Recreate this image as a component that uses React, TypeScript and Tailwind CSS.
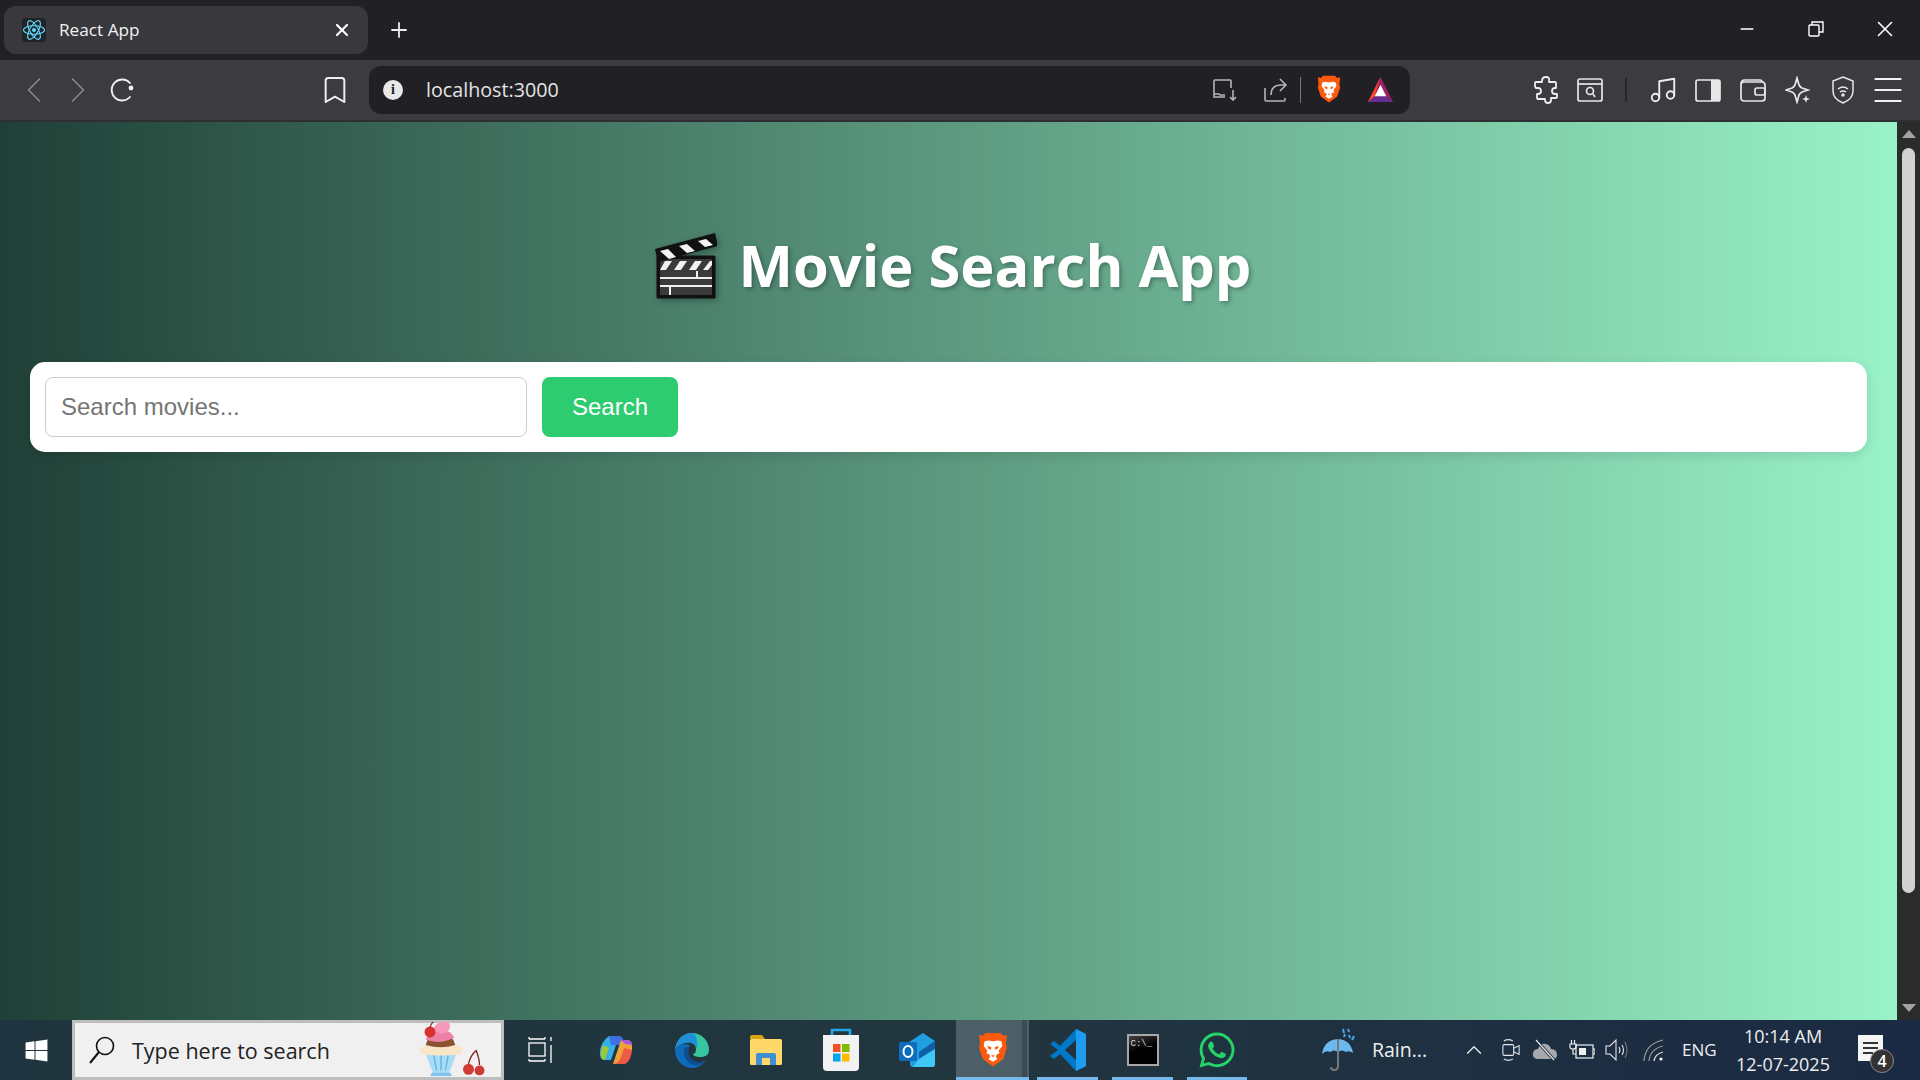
import {
  Bookmark,
  ChevronLeft,
  ChevronRight,
  ChevronUp,
  Menu,
  Minus,
  Music,
  Plus,
  X,
} from "lucide-react";
import { FaWhatsapp, FaWindows } from "react-icons/fa";

const UI_FONT = "font-['Open_Sans','Noto_Sans',sans-serif]";

function ReactLogo() {
  return (
    <div className="w-6 h-6 rounded-sm bg-[#20232a] flex items-center justify-center">
      <svg viewBox="-12 -12 24 24" className="w-6 h-6" fill="none" stroke="#61dafb" strokeWidth="1.1">
        <circle r="2" fill="#61dafb" stroke="none" />
        <ellipse rx="10.5" ry="4.2" />
        <ellipse rx="10.5" ry="4.2" transform="rotate(60)" />
        <ellipse rx="10.5" ry="4.2" transform="rotate(120)" />
      </svg>
    </div>
  );
}

function BraveLogo({ size }: { size: number }) {
  return (
    <svg viewBox="0 0 32 38" width={size} height={size * 1.18}>
      <path d="M8 1h16l3 3 4-1-1 9 1 5-4 12-11 8-11-8L1 17l1-5-1-9 4 1z" fill="#fb5a0c" />
      <path
        d="M16 10l-5-1-4 1-1 5 4 5-1 3 3 1 1 3-2 2 5 3 5-3-2-2 1-3 3-1-1-3 4-5-1-5-4-1z"
        fill="#fff"
      />
      <path d="M10 15l4 1v3l-3-1zM22 15l-4 1v3l3-1zM14 25h4l-2 2z" fill="#fb5a0c" />
    </svg>
  );
}

function BatLogo() {
  return (
    <svg viewBox="0 0 28 28" className="w-[27px] h-[27px]">
      <path d="M14 1L1 27h26z" fill="#9e1f63" />
      <path d="M14 1L1 27l7-6z" fill="#ff4724" />
      <path d="M1 27h26l-7-6H8z" fill="#662d91" />
      <path d="M14 9l-6 12h12z" fill="#fff" />
    </svg>
  );
}

function Clapper() {
  return (
    <svg viewBox="0 0 62 66" className="w-[62px] h-[66px] drop-shadow-[2px_2px_3px_rgba(0,0,0,0.3)]">
      <path d="M3 64V24h56v40z" fill="#111" stroke="#111" strokeWidth="3" strokeLinejoin="round" />
      <rect x="5" y="26" width="52" height="36" fill="#3a3a3a" />
      <path d="M10 28h7l-6 9H5zM25 28h7l-6 9h-7zM40 28h7l-6 9h-7zM55 28h2v4l-4 5h-5z" fill="#f2f2f2" />
      <path d="M5 45h52M5 53h52M42 38v7M15 53v9" stroke="#eee" strokeWidth="2" />
      <path d="M0 16L60 0l3 13L3 29z" fill="#111" />
      <path d="M5 18l8-2 8 8-7 2zM24 13l8-2 8 7-8 2zM43 8l8-2 7 6-8 2z" fill="#f2f2f2" />
    </svg>
  );
}

function CastIcon() {
  return (
    <svg viewBox="0 0 26 24" className="w-[26px] h-6" fill="none" stroke="#b5b5b8" strokeWidth="1.6">
      <path d="M13 19H2v-3V3q0-1 1-1h15q1 0 1 1v7" />
      <path d="M2 16h5l1 1h5" />
      <path d="M21 12v10M18 19l3 3 3-3" />
    </svg>
  );
}

function ShareIcon() {
  return (
    <svg viewBox="0 0 26 26" className="w-[26px] h-[26px]" fill="none" stroke="#b5b5b8" strokeWidth="1.6">
      <path d="M3 11v12q0 1 1 1h18q1 0 1-1v-2" />
      <path d="M9 18q0-10 10-10h4M18 2l6 6-6 6" />
    </svg>
  );
}

function PuzzleIcon() {
  return (
    <svg viewBox="0 0 26 28" className="w-[26px] h-7" fill="none" stroke="#eee" strokeWidth="1.8" strokeLinejoin="round">
      <path d="M9 5q0-4 4-4t3 4v1h6q1 0 1 1v5h-1q-3 0-3 3t3 3h2v3q0 1-1 1h-5v2q0 3-3 3t-3-3v-1H5q-1 0-1-1v-4h1q3 0 3-3t-3-3H3q-1-1-1-2V7q0-1 1-1h6z" />
    </svg>
  );
}

function ReaderIcon() {
  return (
    <svg viewBox="0 0 26 26" className="w-[26px] h-[26px]" fill="none" stroke="#e8e8e8" strokeWidth="1.7">
      <rect x="1" y="2" width="24" height="22" rx="2" />
      <path d="M1 7h24" />
      <circle cx="13" cy="14" r="3.5" />
      <path d="M16 17l2 3" />
    </svg>
  );
}

function SidebarIcon() {
  return (
    <svg viewBox="0 0 26 24" className="w-[26px] h-6">
      <rect x="1" y="2" width="24" height="21" rx="2" fill="none" stroke="#e8e8e8" strokeWidth="1.7" />
      <rect x="16" y="2" width="9" height="21" fill="#e8e8e8" />
    </svg>
  );
}

function WalletIcon() {
  return (
    <svg viewBox="0 0 26 24" className="w-[26px] h-6" fill="none" stroke="#e8e8e8" strokeWidth="1.7">
      <rect x="1" y="4" width="24" height="19" rx="3" />
      <path d="M1 6q0-4 4-4h15q2 0 2 2" />
      <rect x="15" y="10" width="10" height="7" rx="2" />
    </svg>
  );
}

function SparkleIcon() {
  return (
    <svg viewBox="0 0 26 28" className="w-[26px] h-7" fill="none" stroke="#e8e8e8" strokeWidth="1.7">
      <path d="M12 2l2 7q1 2 3 3l6 2-6 2q-2 1-3 3l-2 7-2-7q-1-2-3-3l-6-2 6-2q2-1 3-3z" />
      <path d="M21 19l1 3 3 1-3 1-1 3-1-3-3-1 3-1z" fill="#e8e8e8" stroke="none" />
    </svg>
  );
}

function VpnIcon() {
  return (
    <svg viewBox="0 0 24 28" className="w-6 h-7" fill="none" stroke="#e8e8e8" strokeWidth="1.5">
      <path d="M12 1l10 4v10q0 8-10 12Q2 23 2 15V5z" />
      <path d="M7 13q5-4 10 0M9 16q3-2 6 0" />
      <circle cx="12" cy="19" r="1" fill="#e8e8e8" />
    </svg>
  );
}

function ReloadIcon() {
  return (
    <svg viewBox="0 0 26 26" className="w-[26px] h-[26px]" fill="none" stroke="#f0f0f0" strokeWidth="1.8">
      <path d="M21 20a10.5 10.5 0 1 1 0-14" strokeLinecap="round" />
      <circle cx="22" cy="11" r="2.4" fill="#f0f0f0" stroke="none" />
    </svg>
  );
}

function RestoreIcon() {
  return (
    <svg viewBox="0 0 16 16" className="w-4 h-4" fill="none" stroke="#fff" strokeWidth="1.4">
      <rect x="1" y="4" width="10" height="11" rx="1" />
      <path d="M4 4V1h11v10h-4" />
    </svg>
  );
}

function ToolSlot({ children, w = "w-[45px]" }: { children: React.ReactNode; w?: string }) {
  return <div className={`${w} h-full flex items-center justify-center shrink-0`}>{children}</div>;
}

function TitleBar() {
  return (
    <div className={`h-[60px] bg-[#202025] flex items-start shrink-0 ${UI_FONT}`}>
      <div className="ml-1 mt-[6px] w-[364px] h-12 rounded-xl bg-[#38383d] flex items-center pl-[18px] pr-4">
        <ReactLogo />
        <span className="ml-[13px] text-[17.2px] text-[#f3f3f3]">React App</span>
        <X className="ml-auto text-white" size={20} strokeWidth={2.6} />
      </div>
      <div className="w-[62px] h-full flex items-center justify-center">
        <Plus className="text-[#eee]" size={24} strokeWidth={1.8} />
      </div>
      <div className="ml-auto flex h-full mr-[1px] items-start pt-[12px]">
        <div className="w-[69px] h-[34px] flex items-center justify-center">
          <Minus className="text-white" size={20} strokeWidth={1.8} />
        </div>
        <div className="w-[69px] h-[34px] flex items-center justify-center">
          <RestoreIcon />
        </div>
        <div className="w-[69px] h-[34px] flex items-center justify-center">
          <X className="text-white" size={26} strokeWidth={1.5} />
        </div>
      </div>
    </div>
  );
}

function AddressBar() {
  return (
    <div className={`ml-3 w-[1041px] h-12 rounded-xl bg-[#202025] flex items-center ${UI_FONT}`}>
      <div className="ml-[14px] w-5 h-5 rounded-full bg-[#e8e8e8] flex items-center justify-center text-[#202025] text-[14px] font-bold font-['Liberation_Serif',serif]">
        i
      </div>
      <span className="ml-[23px] text-[19.7px] text-[#e4e4e4]">localhost:3000</span>
      <div className="ml-auto flex items-center h-full">
        <ToolSlot w="w-[50px]">
          <CastIcon />
        </ToolSlot>
        <ToolSlot w="w-[50px]">
          <ShareIcon />
        </ToolSlot>
        <div className="w-px h-[26px] bg-[#77777c]" />
        <ToolSlot w="w-[56px]">
          <BraveLogo size={24} />
        </ToolSlot>
        <ToolSlot w="w-[46px]">
          <BatLogo />
        </ToolSlot>
        <div className="w-[7px]" />
      </div>
    </div>
  );
}

function ToolBar() {
  return (
    <div className="h-[62px] bg-[#3b3b40] border-b-2 border-[#2f2f33] flex items-center shrink-0 pb-[1px]">
      <div className="w-3" />
      <ToolSlot w="w-[44px]">
        <ChevronLeft className="text-[#87878b]" size={46} strokeWidth={0.9} />
      </ToolSlot>
      <ToolSlot w="w-[44px]">
        <ChevronRight className="text-[#87878b]" size={46} strokeWidth={0.9} />
      </ToolSlot>
      <ToolSlot w="w-[44px]">
        <ReloadIcon />
      </ToolSlot>
      <div className="w-[169px]" />
      <ToolSlot w="w-[44px]">
        <Bookmark className="text-[#eee]" size={32} strokeWidth={1.5} />
      </ToolSlot>
      <AddressBar />
      <div className="w-[114px]" />
      <ToolSlot w="w-[44px]">
        <PuzzleIcon />
      </ToolSlot>
      <ToolSlot w="w-[44px]">
        <ReaderIcon />
      </ToolSlot>
      <ToolSlot w="w-[28px]">
        <div className="w-[2px] h-6 bg-[#26262a]" />
      </ToolSlot>
      <ToolSlot>
        <Music className="text-[#eee]" size={30} strokeWidth={1.5} />
      </ToolSlot>
      <ToolSlot>
        <SidebarIcon />
      </ToolSlot>
      <ToolSlot>
        <WalletIcon />
      </ToolSlot>
      <ToolSlot>
        <SparkleIcon />
      </ToolSlot>
      <ToolSlot>
        <VpnIcon />
      </ToolSlot>
      <ToolSlot>
        <Menu className="text-[#f2f2f2]" size={38} strokeWidth={1.3} />
      </ToolSlot>
    </div>
  );
}

function ScrollBar() {
  return (
    <div className="w-[23px] bg-[#2b2b2b] flex flex-col items-center shrink-0 pt-2 pb-2">
      <div className="w-0 h-0 border-x-[7px] border-x-transparent border-b-[8px] border-b-[#a3a3a3]" />
      <div className="mt-[10px] w-[13px] h-[745px] rounded-full bg-[#d1d1d1]" />
      <div className="mt-auto w-0 h-0 border-x-[7px] border-x-transparent border-t-[8px] border-t-[#a3a3a3]" />
    </div>
  );
}

function MoviePage() {
  return (
    <div className="flex-1 bg-[linear-gradient(to_right,#1f4037,#99f2c8)] px-[30px] pt-[111px]">
      <div className={`flex items-center justify-center h-[66px] gap-[22px] pl-[9px] ${UI_FONT}`}>
        <Clapper />
        <h1 className="text-[57.8px] font-bold text-white leading-none pb-[2px] [text-shadow:2px_2px_4px_rgba(0,0,0,0.3)]">
          Movie Search App
        </h1>
      </div>
      <div className="mt-[63px] w-[1837px] h-[90px] bg-white rounded-[15px] p-[15px] flex gap-[15px] shadow-[0_4px_12px_rgba(0,0,0,0.1)] font-['Liberation_Sans',sans-serif]">
        <input
          type="text"
          placeholder="Search movies..."
          className="w-[482px] h-[60px] rounded-lg border border-[#cccccc] px-[15px] text-2xl text-[#222] outline-none placeholder:text-[#757575]"
        />
        <button className="w-[136px] h-[60px] rounded-lg bg-[#2ecc71] text-white text-2xl">Search</button>
      </div>
    </div>
  );
}

function Cupcake() {
  return (
    <svg viewBox="5 2 60 50" className="w-[66px] h-[55px]">
      <path d="M10 28h30l-6 16q-1 4-4 4h-10q-3 0-4-4z" fill="#a9dcf5" />
      <path d="M18 30l3 16M25 30v16M32 30l-3 16" stroke="#5fb2e6" strokeWidth="1.2" />
      <path d="M17 48h16l2 3H15z" fill="#7cc3ee" />
      <path d="M5 26q20-10 40 0l-2 5q-18 3-36 0z" fill="#f8e6c6" />
      <path d="M11 23q2-10 14-12 11 2 13 12-13 4-27 0z" fill="#8a5230" />
      <path d="M11 18q3-8 13-9 11 1 13 7-13 7-26 2z" fill="#ee7fa5" />
      <path d="M17 9q8-12 15-7 3 5-1 9-7 3-14-2z" fill="#f59abb" />
      <circle cx="15" cy="11" r="5" fill="#d8322f" />
      <path d="M15 7q1-5 5-6" stroke="#7a2020" strokeWidth="1" fill="none" />
      <circle cx="50" cy="45" r="5" fill="#cf3a32" />
      <circle cx="60" cy="46" r="4.5" fill="#cf3a32" />
      <path d="M50 40q2-8 7-12 3 8 3 13" stroke="#7a2020" strokeWidth="1.2" fill="none" />
    </svg>
  );
}

function SearchGlass() {
  return (
    <svg viewBox="0 0 26 28" className="w-[26px] h-7" fill="none" stroke="#111" strokeWidth="1.6">
      <circle cx="16" cy="10" r="8.5" />
      <path d="M10 16L1 27" strokeWidth="2" />
    </svg>
  );
}

function SearchBox() {
  return (
    <div className="ml-[72px] w-[432px] h-full bg-[#f0f0f0] border-[3px] border-[#bdbdbd] flex items-center relative">
      <div className="ml-[14px]">
        <SearchGlass />
      </div>
      <span className={`ml-[17px] pt-[2px] text-[21.5px] text-[#222] ${UI_FONT}`}>Type here to search</span>
      <div className="ml-auto mr-[16px] self-end">
        <Cupcake />
      </div>
    </div>
  );
}

function TaskIcon({ children, w, active, open }: { children: React.ReactNode; w: string; active?: boolean; open?: boolean }) {
  return (
    <div className={`${w} h-full relative flex items-center justify-center shrink-0 ${active ? "bg-[#4c5f68]" : ""}`}>
      {children}
      {open && <div className="absolute bottom-0 inset-x-0 h-[3px] bg-[#76b9ed]" />}
    </div>
  );
}

function TaskViewIcon() {
  return (
    <svg viewBox="0 0 26 28" className="w-[26px] h-7" fill="none" stroke="#fff" strokeWidth="1.3">
      <rect x="1" y="7" width="16" height="13" />
      <path d="M1 3h16M1 1v2M17 1v2M1 25h16M1 23v2M17 23v2M23 1v4M23 9v18" />
    </svg>
  );
}

function CopilotIcon() {
  return (
    <svg viewBox="0 0 34 34" className="w-[34px] h-[34px]">
      <path d="M10 3h10l-8 24H6Q0 27 1 18q1-9 9-15z" fill="#33b0e8" />
      <path d="M12 12L10 3h10q3 0 4 3l2 6z" fill="#3f6fe0" />
      <path d="M3 26q-3-5 1-14l6 3-4 12z" fill="#9cc83a" />
      <path d="M24 31H14l8-24h6q6 0 5 9-1 9-9 15z" fill="#f0a23a" />
      <path d="M14 31h12q6-3 7-14l-8-2-3 9q-2 6-8 7z" fill="#ef5a45" />
      <path d="M22 7h6q4 0 5 5l-7-1z" fill="#a259e0" />
    </svg>
  );
}

function EdgeIcon() {
  return (
    <svg viewBox="0 0 36 36" className="w-9 h-9">
      <path d="M18 1a17 17 0 0 1 17 17c0 5-4 7-8 7-5 0-8-1-8-3 2 0 3-2 3-5 0-5-5-8-10-7C6 11 2 15 1 18 2 8 9 1 18 1z" fill="#37c5a0" />
      <path d="M18 1C9 1 2 8 1 18c2-3 6-7 11-7 5-1 9 1 11 5 1-8-1-15-5-15z" fill="#1f8fd8" />
      <path d="M1 18c0 10 8 18 17 18 6 0 10-3 13-7-5 2-11 2-15-3-3-4-2-10 0-13-7-2-14 0-15 5z" fill="#0f6cbd" />
      <path d="M11 15c-3 5-1 13 6 17 5 3 10 1 14-3-5 2-11 2-15-3-2-3-2-8-1-11z" fill="#0b4f8f" />
    </svg>
  );
}

function ExplorerIcon() {
  return (
    <svg viewBox="0 0 32 32" className="w-8 h-8">
      <path d="M0 3q0-2 2-2h10l3 4H0z" fill="#d9a10e" />
      <rect x="0" y="5" width="32" height="26" rx="1.5" fill="#ffd869" />
      <path d="M6 31V21q0-2 2-2h16q2 0 2 2v10h-6v-7h-8v7z" fill="#3f8fd2" />
    </svg>
  );
}

function StoreIcon() {
  return (
    <svg viewBox="0 0 36 44" className="w-9 h-[44px]">
      <path d="M9 8V2h18v6" fill="none" stroke="#23a8e8" strokeWidth="2.5" />
      <path d="M0 7h36v32q0 4-4 4H4q-4 0-4-4z" fill="#f2f2f2" />
      <rect x="10" y="16" width="7.5" height="8" fill="#f25022" />
      <rect x="19" y="16" width="7.5" height="8" fill="#7fba00" />
      <rect x="10" y="25.5" width="7.5" height="8" fill="#00a4ef" />
      <rect x="19" y="25.5" width="7.5" height="8" fill="#ffb900" />
    </svg>
  );
}

function OutlookIcon() {
  return (
    <svg viewBox="0 0 36 36" className="w-9 h-9">
      <path d="M10 10L24 1l12 8v23q0 3-3 3H14q-3 0-3-3z" fill="#1f9fe0" />
      <path d="M20 20L36 9v8L20 27z" fill="#0f5fa8" />
      <path d="M20 27l16-10v15q0 3-3 3H14z" fill="#40c8f4" />
      <rect x="0" y="10" width="18" height="19" rx="2" fill="#0f6cbd" />
      <ellipse cx="9" cy="19.5" rx="4.5" ry="5.5" fill="none" stroke="#fff" strokeWidth="2" />
    </svg>
  );
}

function VsCodeIcon() {
  return (
    <svg viewBox="0 0 36 44" className="w-9 h-[44px]">
      <path d="M26 1l10 5v32l-10 5-16-17-6 5-4-3 8-6-8-6 4-3 6 5z" fill="#0078c8" />
      <path d="M26 1l10 5v32l-10 5z" fill="#1f9cf0" />
      <path d="M26 12L15 22l11 10z" fill="#22303d" />
    </svg>
  );
}

function CmdIcon() {
  return (
    <div className="w-8 h-8 bg-[linear-gradient(160deg,#444_0%,#000_45%)] border-2 border-[#a8a8a8] text-[9px] leading-[10px] pl-[2px] pt-[3px] text-[#ddd] font-['Liberation_Mono',monospace]">
      C:\_
    </div>
  );
}

function UmbrellaIcon() {
  return (
    <svg viewBox="0 0 36 44" className="w-9 h-[44px]">
      <path d="M1 26Q3 12 17 11q13 1 15 14-4-3-7-1-4-3-8 0-4-3-8 0-4-2-8 2z" fill="#6cb8f0" />
      <path d="M17 11v27q0 4-4 4-3 0-3-3" fill="none" stroke="#777" strokeWidth="2" />
      <path d="M22 1l1 4M27 1l1 3M28 7l1 3M33 8l-2 4M24 6l-1 3" stroke="#4ba8ea" strokeWidth="2" />
    </svg>
  );
}

function MeetIcon() {
  return (
    <svg viewBox="0 0 20 28" className="w-[18px] h-[26px]" fill="none" stroke="#e6e6e6" strokeWidth="1.2">
      <rect x="1" y="8" width="12" height="12" rx="1.5" />
      <path d="M13 12l6-3v10l-6-3M2 4q5-3 10 0M2 24q5 3 10 0" />
    </svg>
  );
}

function OneDriveIcon() {
  return (
    <svg viewBox="0 0 26 22" className="w-[26px] h-[22px]">
      <path d="M5 20q-5-1-4-6 1-4 5-4 2-6 8-5 4 1 5 5 6 0 6 6 0 4-4 4z" fill="#a6a8ab" />
      <path d="M4 1l18 20" stroke="#1c2c40" strokeWidth="3" />
      <path d="M4 1l18 20" stroke="#e6e6e6" strokeWidth="1.2" />
    </svg>
  );
}

function BatteryIcon() {
  return (
    <svg viewBox="0 0 26 22" className="w-[26px] h-[22px]" fill="none" stroke="#f0f0f0" strokeWidth="1.2">
      <rect x="7" y="6" width="17" height="13" />
      <rect x="10" y="9" width="7" height="7" fill="#f0f0f0" stroke="none" />
      <path d="M24 10h2v5h-2M1 5h6v3q0 2-3 2t-3-2zM2.5 1v4M5.5 1v4M4 10v5h3" />
    </svg>
  );
}

function SpeakerIcon() {
  return (
    <svg viewBox="0 0 24 24" className="w-6 h-6" fill="none" stroke="#e6e6e6" strokeWidth="1.1">
      <path d="M1 8h4l6-6v20l-6-6H1z" />
      <path d="M14 9q2 3 0 6M17 7q3 5 0 10" />
      <path d="M20 4q4 8 0 16" stroke="#777" />
    </svg>
  );
}

function WifiIcon() {
  return (
    <svg viewBox="0 0 24 24" className="w-6 h-6" fill="none" stroke="#9a9a9a" strokeWidth="1.2">
      <path d="M1 23Q2 6 20 2" />
      <path d="M6 23Q7 11 20 8" />
      <path d="M11 23q1-7 9-9" stroke="#e6e6e6" />
      <circle cx="18" cy="21" r="1.6" fill="#fff" stroke="none" />
    </svg>
  );
}

function TaskBar() {
  return (
    <div className="h-[60px] bg-[linear-gradient(90deg,#20343f_0%,#22363f_50%,#1a2a43_100%)] flex items-stretch shrink-0 relative">
      <FaWindows className="absolute left-[24px] top-[18px] text-white" size={25} />
      <SearchBox />
      <TaskIcon w="w-[73px]">
        <TaskViewIcon />
      </TaskIcon>
      <TaskIcon w="w-[78px]">
        <CopilotIcon />
      </TaskIcon>
      <TaskIcon w="w-[73px]">
        <EdgeIcon />
      </TaskIcon>
      <TaskIcon w="w-[75px]">
        <ExplorerIcon />
      </TaskIcon>
      <TaskIcon w="w-[75px]">
        <StoreIcon />
      </TaskIcon>
      <TaskIcon w="w-[78px]">
        <OutlookIcon />
      </TaskIcon>
      <TaskIcon w="w-[73px]" active open>
        <BraveLogo size={30} />
        <div className="absolute right-[2px] inset-y-0 w-[5px] bg-[#3b4c56]" />
      </TaskIcon>
      <div className="w-2" />
      <TaskIcon w="w-[61px]" open>
        <VsCodeIcon />
      </TaskIcon>
      <div className="w-[14px]" />
      <TaskIcon w="w-[61px]" open>
        <CmdIcon />
      </TaskIcon>
      <div className="w-[14px]" />
      <TaskIcon w="w-[60px]" open>
        <FaWhatsapp className="text-[#25d366]" size={40} />
      </TaskIcon>
      <div className={`flex items-center text-[#eee] ${UI_FONT}`}>
        <div className="w-[110px] flex justify-end">
          <UmbrellaIcon />
        </div>
        <span className="ml-[15px] w-[86px] text-[19.5px]">Rain...</span>
        <ChevronUp className="ml-[3px]" size={26} strokeWidth={1.2} />
        <div className="w-[24px] ml-[12px] flex justify-center">
          <MeetIcon />
        </div>
        <div className="w-[44px] flex justify-center">
          <OneDriveIcon />
        </div>
        <div className="w-[30px] flex justify-center">
          <BatteryIcon />
        </div>
        <div className="w-[40px] flex justify-center">
          <SpeakerIcon />
        </div>
        <div className="w-[36px] flex justify-center">
          <WifiIcon />
        </div>
        <span className="ml-[9px] w-[38px] text-[17px]">ENG</span>
        <div className="w-[122px] ml-[2px] flex flex-col items-center text-[18px] leading-[28px]">
          <span>10:14 AM</span>
          <span>12-07-2025</span>
        </div>
        <div className="relative ml-[14px] w-[25px] h-[26px] bg-[#f5f5f5] flex flex-col justify-center gap-[3px] px-[5px] mb-1">
          <div className="h-[2px] bg-[#333]" />
          <div className="h-[2px] bg-[#333]" />
          <div className="h-[2px] bg-[#333] w-2/3" />
          <div className="absolute left-[12px] top-[14px] w-6 h-6 rounded-full bg-[#333] border border-[#888] text-white text-[16px] font-semibold flex items-center justify-center">
            4
          </div>
        </div>
      </div>
    </div>
  );
}

export default function App() {
  return (
    <div className="w-[1920px] h-[1080px] flex flex-col overflow-hidden">
      <TitleBar />
      <ToolBar />
      <div className="flex-1 flex min-h-0">
        <MoviePage />
        <ScrollBar />
      </div>
      <TaskBar />
    </div>
  );
}
